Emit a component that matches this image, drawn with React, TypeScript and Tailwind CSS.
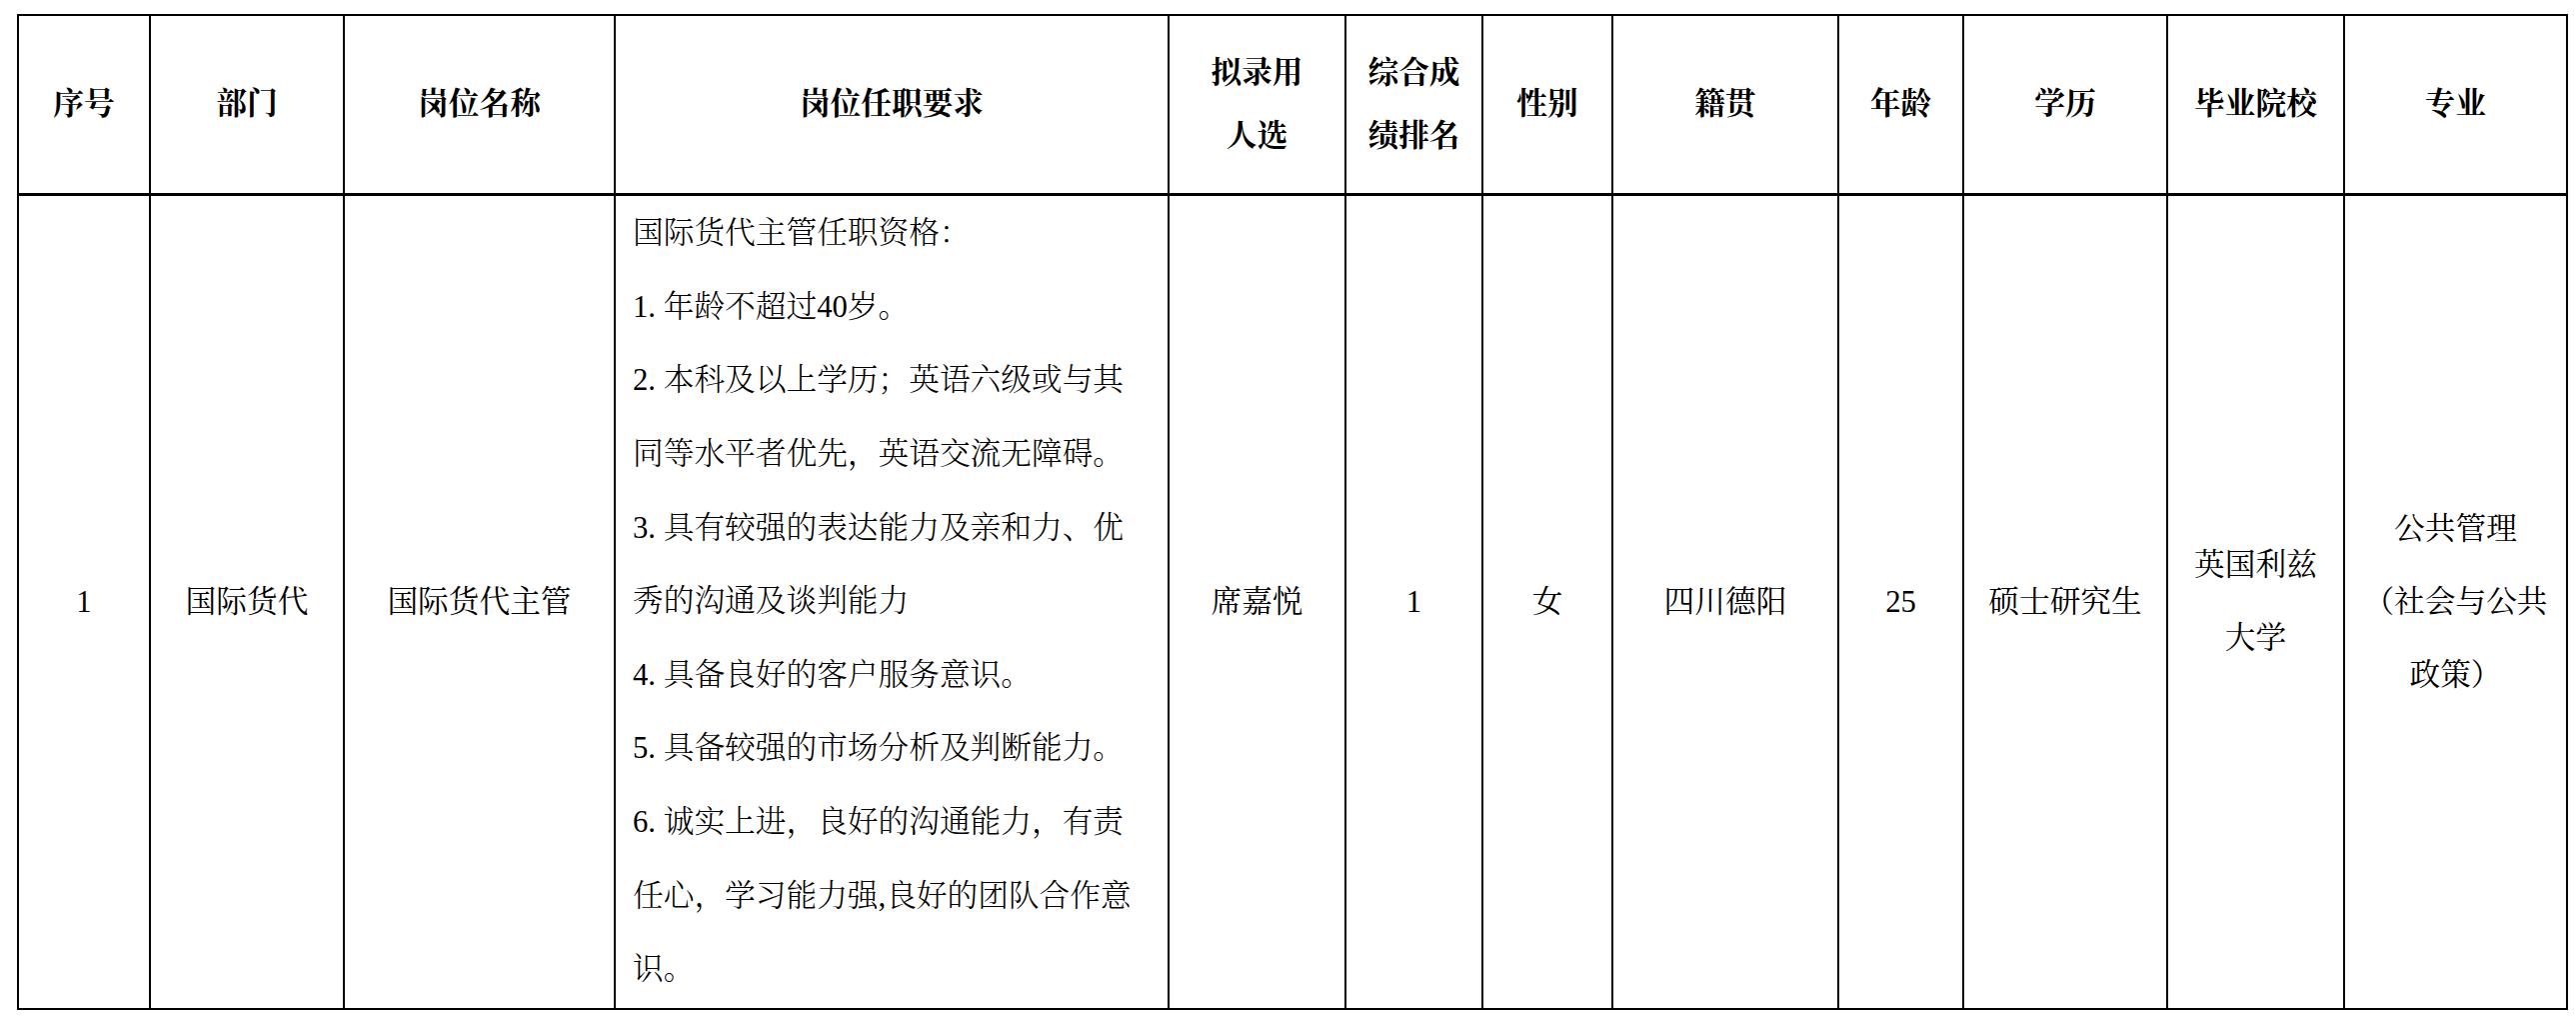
import React from "react";

const FONT = '"Liberation Serif", "Noto Serif CJK SC", "Noto Sans CJK SC", serif';

const headers: React.ReactNode[] = [
  "序号",
  "部门",
  "岗位名称",
  "岗位任职要求",
  <>拟录用<br />人选</>,
  <>综合成<br />绩排名</>,
  "性别",
  "籍贯",
  "年龄",
  "学历",
  "毕业院校",
  "专业",
];

const reqLines: { n?: string; t: string }[] = [
  { t: "国际货代主管任职资格：" },
  { n: "1.", t: "年龄不超过40岁。" },
  { n: "2.", t: "本科及以上学历；英语六级或与其" },
  { t: "同等水平者优先，英语交流无障碍。" },
  { n: "3.", t: "具有较强的表达能力及亲和力、优" },
  { t: "秀的沟通及谈判能力" },
  { n: "4.", t: "具备良好的客户服务意识。" },
  { n: "5.", t: "具备较强的市场分析及判断能力。" },
  { n: "6.", t: "诚实上进，良好的沟通能力，有责" },
  { t: "任心，学习能力强,良好的团队合作意" },
  { t: "识。" },
];

function Center({ children }: { children: React.ReactNode }) {
  return (
    <div className="bg-white flex items-center justify-center text-center leading-[73px]">
      <div>{children}</div>
    </div>
  );
}

export default function App() {
  return (
    <div className="min-h-screen bg-white pt-[14px] pl-[17px]" style={{ fontFamily: FONT }}>
      <div className="w-[2552px] bg-black p-[2px] text-black text-[30.7px]">
        <div className="grid grid-cols-[130px_192px_269px_552px_175px_135px_128px_224px_123px_202px_175px_221px] grid-rows-[177px_812px] gap-x-[2px] gap-y-[3px]">
          {headers.map((h, i) => (
            <div
              key={i}
              className="bg-white flex items-center justify-center text-center font-bold leading-[63px]"
            >
              <div>{h}</div>
            </div>
          ))}
          <Center>1</Center>
          <Center>国际货代</Center>
          <Center>国际货代主管</Center>
          <div className="bg-white flex flex-col justify-center pl-[17px] font-light leading-[73.6px]">
            {reqLines.map((l, i) => (
              <div key={i} className="whitespace-nowrap">
                {l.n && <span className="inline-block w-[1em]">{l.n}</span>}
                {l.t}
              </div>
            ))}
          </div>
          <Center>席嘉悦</Center>
          <Center>1</Center>
          <Center>女</Center>
          <Center>四川德阳</Center>
          <Center>25</Center>
          <Center>硕士研究生</Center>
          <Center>
            英国利兹
            <br />
            大学
          </Center>
          <Center>
            公共管理
            <br />
            （社会与公共
            <br />
            政策）
          </Center>
        </div>
      </div>
    </div>
  );
}
